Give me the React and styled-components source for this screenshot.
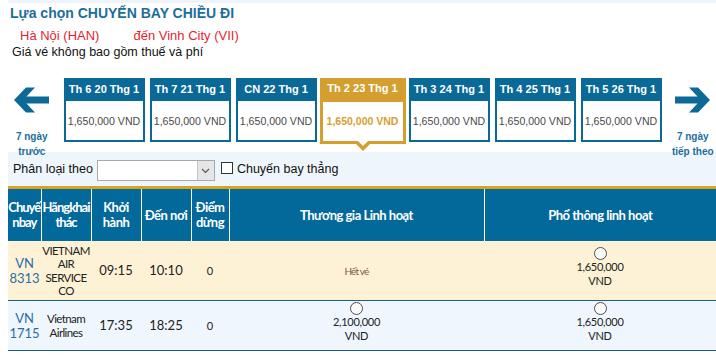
import React from "react"
import styled, { createGlobalStyle } from "styled-components"

const GlobalStyle = createGlobalStyle`
  body {
    margin: 0;
    background: #fff;
    font-family: "Liberation Sans", Arial, sans-serif;
  }
`;

const BLUE = "#0a6996";
const GOLD = "#d59f2f";

const Page = styled.div`
  width: 708px;
  margin-left: 8px;
`;

const TopStrip = styled.div`
  height: 3px;
  background: #eef4fb;
`;

const Title = styled.h1`
  margin: 0 0 0 2px;
  font-size: 14px;
  line-height: 20px;
  font-weight: bold;
  color: #1c6e9a;
`;

const Route = styled.div`
  display: flex;
  gap: 34px;
  margin-top: 5px;
  padding-left: 12px;
  font-size: 13px;
  line-height: 16px;
  color: #e41f2e;
`;

const Note = styled.div`
  padding-left: 4px;
  font-size: 12.5px;
  line-height: 16px;
  color: #111;
`;

const DateRow = styled.div`
  display: flex;
  align-items: flex-start;
  height: 74px;
  padding-top: 18px;
`;

const Nav = styled.div`
  width: ${(p) => p.$w}px;
  margin-left: ${(p) => p.$ml || 0}px;
  display: flex;
  flex-direction: column;
  align-items: center;
  padding-top: 9px;
  color: #1b6ea0;
  font-size: 10px;
  font-weight: bold;
  line-height: 15px;
  text-align: center;

  svg {
    display: block;
    margin-bottom: 16px;
  }
`;

const Cards = styled.div`
  display: flex;
  gap: 5px;
  margin-left: 8px;
`;

const Card = styled.div`
  position: relative;
  width: ${(p) => (p.$active ? 86 : 81)}px;
  height: ${(p) => (p.$active ? 66 : 64)}px;
  margin: 0 ${(p) => (p.$active ? -2 : 0)}px;
  box-sizing: border-box;
  border: ${(p) => (p.$active ? 3 : 2)}px solid ${(p) => (p.$active ? GOLD : BLUE)};
  border-top-width: 0;
  background: #fff;
  display: flex;
  flex-direction: column;

  ${(p) =>
    p.$active &&
    `
    &::before, &::after {
      content: "";
      position: absolute;
      left: 50%;
      width: 0;
      height: 0;
      border-style: solid;
      border-color: transparent;
    }
    &::before {
      bottom: -10px;
      margin-left: -10px;
      border-width: 10px 10px 0 10px;
      border-top-color: ${GOLD};
    }
    &::after {
      bottom: -5px;
      margin-left: -6px;
      border-width: 6px 6px 0 6px;
      border-top-color: #fff;
    }
  `}
`;

const CardHead = styled.div`
  height: ${(p) => (p.$active ? 24 : 23)}px;
  margin: 0 ${(p) => (p.$active ? -3 : -2)}px;
  background: ${(p) => (p.$active ? GOLD : BLUE)};
  color: #fff;
  font-size: 11px;
  font-weight: bold;
  line-height: ${(p) => (p.$active ? 21 : 22)}px;
  text-align: center;
`;

const CardBody = styled.div`
  flex: 1;
  display: flex;
  align-items: center;
  justify-content: center;
  font-size: ${(p) => (p.$active ? 10.5 : 10.6)}px;
  font-weight: ${(p) => (p.$active ? "bold" : "normal")};
  color: ${(p) => (p.$active ? GOLD : "#4a4a4a")};
  padding-bottom: ${(p) => (p.$active ? 2 : 0)}px;
`;

const FilterBar = styled.div`
  display: flex;
  align-items: center;
  height: 34px;
  padding-left: 5px;
  background: #eef5fb;
  font-size: 12.5px;
  color: #111;
`;

const Select = styled.div`
  display: flex;
  width: 118px;
  height: 21px;
  margin: 3px 0 0 4px;
  box-sizing: border-box;
  border: 1px solid #a8a8a8;
  background: #fff;
`;

const SelectButton = styled.div`
  margin-left: auto;
  width: 16px;
  display: flex;
  align-items: center;
  justify-content: center;
  background: #e6e6e6;
  border-left: 1px solid #c4c4c4;
`;

const Check = styled.span`
  width: 12px;
  height: 12px;
  margin: -3px 4px 0 6px;
  box-sizing: border-box;
  border: 1px solid #333;
  background: #fff;
`;

const Table = styled.table`
  width: 708px;
  border-collapse: collapse;
  table-layout: fixed;
  border-top: 3px solid #d8a320;
  font-family: Lato, "Liberation Sans", sans-serif;
`;

const Th = styled.th`
  height: 52px;
  padding: 0;
  background: #03689a;
  color: #fff;
  font-size: 13px;
  font-weight: bold;
  letter-spacing: -0.5px;
  line-height: 15px;
  white-space: nowrap;
  text-align: center;
  vertical-align: middle;

  & + & {
    border-left: 1px solid #fff;
  }
`;

const Tight = styled.span`
  letter-spacing: -1px;
  word-spacing: -2px;
`;

const Row = styled.tr`
  background: ${(p) => p.$bg};
  border-bottom: 1px solid #1a5e86;
`;

const Td = styled.td`
  height: ${(p) => p.$h}px;
  padding: 0;
  text-align: center;
  vertical-align: middle;
  font-size: 13px;
  line-height: 15px;
  color: #222;
`;

const FlightNo = styled(Td)`
  color: #2a6da6;
`;

const Airline = styled(Td)`
  font-size: 11.5px;
  letter-spacing: -0.6px;
  word-spacing: -1px;
  line-height: 13.5px;
`;

const Small = styled(Td)`
  font-size: 11px;
`;

const Price = styled(Td)`
  padding-bottom: 7px;
  font-size: 11px;
  letter-spacing: -0.3px;
  line-height: 14px;
`;

const SoldOut = styled.span`
  font-size: 10px;
  letter-spacing: -0.8px;
  color: #7a5b4c;
`;

const Radio = styled.span`
  display: block;
  width: 13px;
  height: 13px;
  margin: 0 auto;
  box-sizing: border-box;
  border: 1.5px solid #4d4d4d;
  border-radius: 50%;
  background: #fafafa;
`;

function Arrow({ dir }) {
  return (
    <svg width="35" height="26" viewBox="0 0 35 26">
      <polygon
        transform={dir === "right" ? "translate(35 0) scale(-1 1)" : undefined}
        points="0,13 12,0.5 21,0.5 12.5,9.5 35,9.5 35,16.5 12.5,16.5 21,25.5 12,25.5"
        fill="#0d6a96"
      />
    </svg>
  );
}

const days = [
  "Th 6 20 Thg 1",
  "Th 7 21 Thg 1",
  "CN 22 Thg 1",
  "Th 2 23 Thg 1",
  "Th 3 24 Thg 1",
  "Th 4 25 Thg 1",
  "Th 5 26 Thg 1",
];

function Fare({ price }) {
  return (
    <>
      <Radio />
      {price}
      <br />
      VND
    </>
  );
}

export default function App() {
  return (
    <Page>
      <GlobalStyle />
      <TopStrip />
      <Title>Lựa chọn CHUYẾN BAY CHIỀU ĐI</Title>
      <Route>
        <span>Hà Nội (HAN)</span>
        <span>đến Vinh City (VII)</span>
      </Route>
      <Note>Giá vé không bao gồm thuế và phí</Note>

      <DateRow>
        <Nav $w={48}>
          <Arrow dir="left" />
          7 ngày
          <br />
          trước
        </Nav>
        <Cards>
          {days.map((d, i) => (
            <Card key={d} $active={i === 3}>
              <CardHead $active={i === 3}>{d}</CardHead>
              <CardBody $active={i === 3}>1,650,000 VND</CardBody>
            </Card>
          ))}
        </Cards>
        <Nav $w={47} $ml={8}>
          <Arrow dir="right" />
          7 ngày
          <br />
          tiếp theo
        </Nav>
      </DateRow>

      <FilterBar>
        Phân loại theo
        <Select>
          <SelectButton>
            <svg width="9" height="6" viewBox="0 0 9 6">
              <polyline points="1,1 4.5,4.5 8,1" fill="none" stroke="#555" strokeWidth="1.1" />
            </svg>
          </SelectButton>
        </Select>
        <Check />
        Chuyến bay thẳng
      </FilterBar>

      <Table>
        <colgroup>
          <col style={{ width: 33 }} />
          <col style={{ width: 50 }} />
          <col style={{ width: 50 }} />
          <col style={{ width: 50 }} />
          <col style={{ width: 38 }} />
          <col style={{ width: 255 }} />
          <col />
        </colgroup>
        <thead>
          <tr>
            <Th><Tight>Chuyế<br />n bay</Tight></Th>
            <Th><Tight>Hãng khai<br />thác</Tight></Th>
            <Th>Khởi<br />hành</Th>
            <Th>Đến nơi</Th>
            <Th>Điểm<br />dừng</Th>
            <Th>Thương gia Linh hoạt</Th>
            <Th>Phổ thông linh hoạt</Th>
          </tr>
        </thead>
        <tbody>
          <Row $bg="#fdf2d6">
            <FlightNo $h={59}>VN<br />8313</FlightNo>
            <Airline>VIETNAM<br />AIR<br />SERVICE<br />CO</Airline>
            <Td>09:15</Td>
            <Td>10:10</Td>
            <Small>0</Small>
            <Td><SoldOut>Hết vé</SoldOut></Td>
            <Price><Fare price="1,650,000" /></Price>
          </Row>
          <Row $bg="#eff6fd">
            <FlightNo $h={49}>VN<br />1715</FlightNo>
            <Airline>Vietnam<br />Airlines</Airline>
            <Td>17:35</Td>
            <Td>18:25</Td>
            <Small>0</Small>
            <Price><Fare price="2,100,000" /></Price>
            <Price><Fare price="1,650,000" /></Price>
          </Row>
        </tbody>
      </Table>
    </Page>
  );
}
